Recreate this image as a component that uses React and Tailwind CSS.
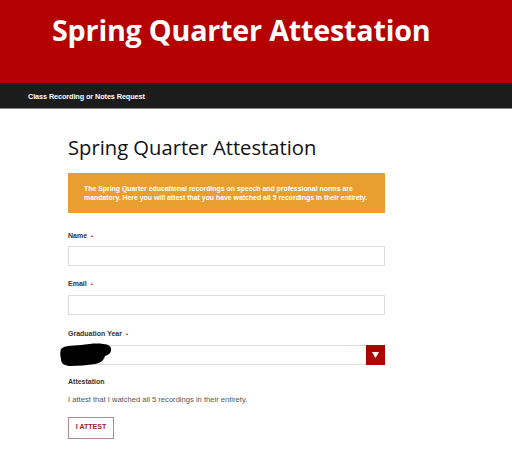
import React from 'react';

const Label = ({ children, required }) => (
  <div className="text-[7px] font-bold text-[#333] leading-none">
    {children}
    {required && <span className="ml-1 text-[#c00] text-[6px]">•</span>}
  </div>
);

const App = () => {
  return (
    <div className="w-[512px] h-[451px] bg-white overflow-hidden font-['Liberation_Sans',Arial,sans-serif]">
      {/* Banner */}
      <div className="h-[83px] bg-[#b40000] pl-[52px] pt-[10px]">
        <h1 className="text-white text-[28.7px] font-bold leading-[40px] font-['Open_Sans',sans-serif] tracking-[-0.2px]">
          Spring Quarter Attestation
        </h1>
      </div>
      {/* Nav */}
      <div className="h-[26px] bg-[#1c1c1c] border-b border-[#888] flex items-center pl-[28px] pt-[2px]">
        <span className="text-white text-[7.3px] font-bold tracking-[-0.1px] leading-none">Class Recording or Notes Request</span>
      </div>

      <div className="pl-[68px] w-[317px] box-content">
        <h2 className="mt-[23px] text-[20.2px] leading-[30px] text-[#111] font-['Open_Sans',sans-serif]">
          Spring Quarter Attestation
        </h2>

        <div className="mt-[11px] h-[40px] bg-[#e89f2f] pl-[16px] pt-[11px] text-white text-[6.9px] font-bold leading-[9px]">
          The Spring Quarter educational recordings on speech and professional norms are
          <br />
          mandatory. Here you will attest that you have watched all 5 recordings in their entirety.
        </div>

        <div className="mt-[19px]">
          <Label required>Name</Label>
          <div className="mt-[7px] h-[20px] border border-[#ddd]" />
        </div>

        <div className="mt-[14px]">
          <Label required>Email</Label>
          <div className="mt-[8px] h-[20px] border border-[#ddd]" />
        </div>

        <div className="mt-[15px]">
          <Label required>Graduation Year</Label>
          <div className="relative mt-[8px] h-[20px] border border-[#ddd] flex justify-end">
            <div className="w-[19px] h-[20px] -mt-px -mr-px bg-[#b00000] flex items-center justify-center">
              <svg width="7" height="6" viewBox="0 0 7 6">
                <path d="M0 0 H7 L3.5 6 Z" fill="#fff" />
              </svg>
            </div>
            <svg className="absolute left-[-10px] top-[-4px]" width="54" height="26" viewBox="0 0 54 26">
              <path
                d="M2 7 C6 3 14 4 22 3 C30 2 38 1 44 2 C50 2 53 5 52 9 C51 12 49 13 46 14 C45 18 42 21 36 22 C28 23 20 24 12 24 C6 24 2 22 2 17 C1 13 1 10 2 7 Z"
                fill="#000"
              />
            </svg>
          </div>
        </div>

        <div className="mt-[13px] text-[7px] font-bold text-[#333] leading-none">Attestation</div>
        <div className="mt-[11px] text-[7.6px] text-[#555] leading-none">
          I attest that I watched all 5 recordings in their entirety.
        </div>
        <button className="mt-[13px] w-[46px] h-[22px] border border-[#b08a8a] text-[#9b1c1c] text-[7px] font-bold flex items-center justify-center">
          I ATTEST
        </button>
      </div>
    </div>
  );
};

export default App;
